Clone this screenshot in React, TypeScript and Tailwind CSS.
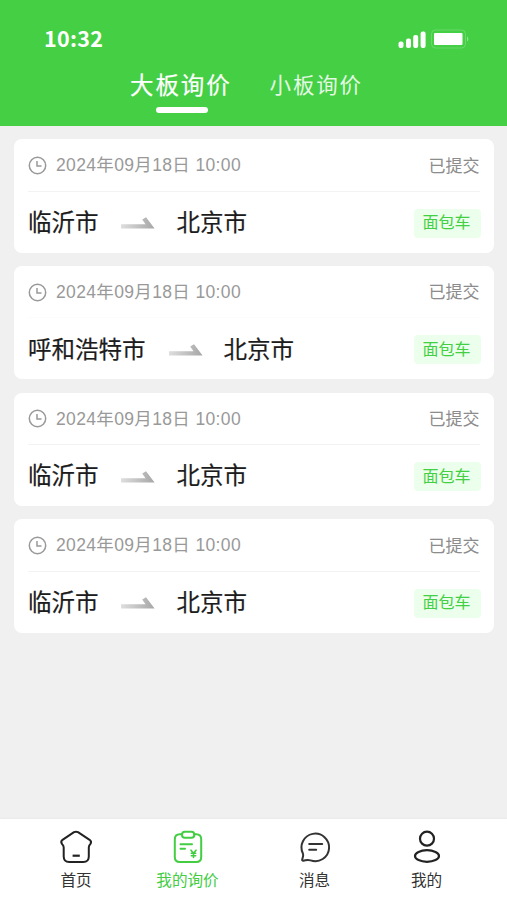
import { useState } from "react";

interface Quote {
  id: number;
  time: string;
  status: string;
  from: string;
  to: string;
  vehicle: string;
}

const quotes: Quote[] = [
  { id: 1, time: "2024年09月18日 10:00", status: "已提交", from: "临沂市", to: "北京市", vehicle: "面包车" },
  { id: 2, time: "2024年09月18日 10:00", status: "已提交", from: "呼和浩特市", to: "北京市", vehicle: "面包车" },
  { id: 3, time: "2024年09月18日 10:00", status: "已提交", from: "临沂市", to: "北京市", vehicle: "面包车" },
  { id: 4, time: "2024年09月18日 10:00", status: "已提交", from: "临沂市", to: "北京市", vehicle: "面包车" },
];

function StatusBar() {
  return (
    <div className="flex items-start justify-between pl-[44px] pr-[38px] pt-[23px]">
      <span className="text-[21.5px] font-bold leading-[30px] tracking-[0.3px] text-white">10:32</span>
      <div className="flex items-center gap-[5px] pt-[6px]">
        <svg width="28" height="18" viewBox="0 0 28 18" fill="#fff">
          <rect x="0.500" y="11.500" width="5" height="6.5" rx="2" />
          <rect x="8" y="8.500" width="5" height="9.5" rx="2" />
          <rect x="15.200" y="5" width="5" height="13" rx="2" />
          <rect x="22.600" y="1.500" width="5" height="16.5" rx="2" />
        </svg>
        <svg width="38" height="20" viewBox="0 0 38 20" fill="none">
          <rect x="0.5" y="1" width="34" height="18" rx="4" stroke="#fff" strokeOpacity="0.2" />
          <rect x="3" y="4" width="28.5" height="12" rx="1" fill="#fff" />
          <path d="M36 7.5c1.8.8 1.8 4.2 0 5z" fill="#fff" fillOpacity="0.4" />
        </svg>
      </div>
    </div>
  );
}

function ClockIcon() {
  return (
    <svg width="19" height="19" viewBox="0 0 19 19" fill="none" stroke="#999" strokeWidth="1.5">
      <circle cx="9.5" cy="9.5" r="8.2" />
      <path d="M9 5v5h4.5" />
    </svg>
  );
}

function RouteArrow({ id }: { id: number }) {
  return (
    <svg width="35" height="14" viewBox="0 0 35 14">
      <defs>
        <linearGradient id={`arrow-${id}`} x1="0" x2="1" y1="0" y2="0">
          <stop offset="0" stopColor="#dedede" />
          <stop offset="1" stopColor="#a6a6a6" />
        </linearGradient>
      </defs>
      <path d="M1 8.200h24.500L22.200 3.400L26 1.200L34.600 12.600H1z" fill={`url(#arrow-${id})`} />
    </svg>
  );
}

function QuoteCard({ quote }: { quote: Quote }) {
  return (
    <div className="h-[113.6px] rounded-lg bg-white px-[14px]">
      <div
        className={`flex h-[52.5px] items-center border-b pt-px ${
          quote.id === 2 ? "border-[#fcfcfc]" : "border-[#f3f3f3]"
        }`}
      >
        <ClockIcon />
        <span className="ml-[9px] text-[17.5px] tracking-[0.35px] text-[#999]">{quote.time}</span>
        <span className="ml-auto pt-[2px] text-[17px] text-[#8c8c8c]">{quote.status}</span>
      </div>
      <div className="flex h-[61px] items-center pt-[2px]">
        <span className="pt-px text-[23.5px] text-[#1c1c1c] [-webkit-text-stroke:0.2px_#1c1c1c]">{quote.from}</span>
        <span className={quote.id === 2 ? "ml-[22.5px] mr-[20.5px]" : "mx-[21.5px]"}>
          <RouteArrow id={quote.id} />
        </span>
        <span className="pt-px text-[23.5px] text-[#1c1c1c] [-webkit-text-stroke:0.2px_#1c1c1c]">{quote.to}</span>
        <span className="-mr-px ml-auto flex h-[29px] w-[67px] items-center justify-center rounded-sm bg-[#ecffec] pr-px text-[16px] text-[#43cf43]">
          {quote.vehicle}
        </span>
      </div>
    </div>
  );
}

function HomeIcon() {
  return (
    <svg width="36" height="36" viewBox="0 0 36 36" fill="none" stroke="#222" strokeWidth="2" strokeLinecap="round" strokeLinejoin="round">
      <path d="M16 3.200Q18 2.200 20 3.200L31.600 10.800Q34 12.500 32.400 15Q30.800 16.400 30.800 18.500V27.500Q30.800 33 25.300 33H11.200Q5.700 33 5.700 27.500V18.500Q5.700 16.400 4 15Q2.300 12.500 4.500 10.800Z" />
      <path d="M14.600 26.700h7.200" strokeLinecap="butt" strokeWidth="2.200" />
    </svg>
  );
}

function QuoteIcon() {
  return (
    <svg width="36" height="36" viewBox="0 0 36 36" fill="none" stroke="#43cd43" strokeWidth="2" strokeLinecap="round" strokeLinejoin="round">
      <path d="M12.200 5.300H9.800Q4.800 5.300 4.800 10.300V28Q4.800 33 9.800 33H26.200Q31.200 33 31.200 28V10.300Q31.200 5.300 26.200 5.300H24" />
      <rect x="12" y="2.800" width="12.300" height="6" rx="2.800" />
      <path d="M10.500 15.200h11.500M10.500 19.700h4.500" />
      <path d="M21 21.200l2.500 3 2.500-3M23.500 24v4.500M21.300 24.300h4.400M21.300 26.700h4.400" strokeWidth="1.600" />
    </svg>
  );
}

function MessageIcon() {
  return (
    <svg width="36" height="36" viewBox="0 0 36 36" fill="none" stroke="#333" strokeWidth="2" strokeLinecap="round" strokeLinejoin="round">
      <path d="M5.900 24.500A13.800 13.800 0 1 1 13.600 31.400Q11 30.600 8.500 31.200L6.200 31.700Q4.900 31.700 5.200 30.400L6 27.500Q6.400 26 5.900 24.500Z" />
      <path d="M12.200 15h13M12.200 20.800h7" />
    </svg>
  );
}

function UserIcon() {
  return (
    <svg width="36" height="36" viewBox="0 0 36 36" fill="none" stroke="#222" strokeWidth="2.200">
      <circle cx="18" cy="9.700" r="7" />
      <ellipse cx="18" cy="27" rx="12" ry="5.800" />
    </svg>
  );
}

const navItems = [
  { label: "首页", icon: <HomeIcon /> },
  { label: "我的询价", icon: <QuoteIcon /> },
  { label: "消息", icon: <MessageIcon /> },
  { label: "我的", icon: <UserIcon /> },
];

export default function App() {
  const [tab, setTab] = useState(0);
  const [page, setPage] = useState(1);

  return (
    <div className="flex h-[900px] w-[507px] flex-col overflow-hidden bg-[#f0f0f0] font-['Liberation_Sans','Noto_Sans_CJK_SC',sans-serif]">
      {/* Header */}
      <header className="h-[125.5px] bg-[#44cf44] font-['Noto_Sans_CJK_SC',sans-serif]">
        <StatusBar />
        <div className="flex items-start pl-[130px] pt-[13px]">
          {["大板询价", "小板询价"].map((name, i) => (
            <button
              key={name}
              onClick={() => setTab(i)}
              className={`flex flex-col items-center whitespace-nowrap leading-[36px] text-white ${
                tab === i
                  ? "text-[23.5px] tracking-[1.9px] [-webkit-text-stroke:0.2px_#fff]"
                  : "text-[21.5px] tracking-[1.8px] opacity-85"
              } ${i === 1 ? "ml-[38px]" : ""}`}
            >
              {name}
              {tab === i && <span className="ml-[2px] mt-[4.5px] h-[6px] w-[52px] rounded-full bg-white" />}
            </button>
          ))}
        </div>
      </header>

      {/* Quote list */}
      <main className="flex flex-1 flex-col gap-[13.2px] pl-[14px] pr-[13.5px] pt-[13.5px]">
        {quotes.map((quote) => (
          <QuoteCard key={quote.id} quote={quote} />
        ))}
      </main>

      {/* Bottom navigation */}
      <nav className="grid h-[81px] grid-cols-[152px_71px_183px_41px] bg-white pt-[10px] shadow-[0_-1px_2px_rgba(0,0,0,0.03)]">
        {navItems.map((item, i) => (
          <button
            key={item.label}
            onClick={() => setPage(i)}
            className={`flex flex-col items-center whitespace-nowrap text-[15.6px] leading-[22px] ${
              page === i ? "text-[#43cd43]" : "text-[#333]"
            }`}
          >
            {item.icon}
            <span className="mt-[5px]">{item.label}</span>
          </button>
        ))}
      </nav>
    </div>
  );
}
